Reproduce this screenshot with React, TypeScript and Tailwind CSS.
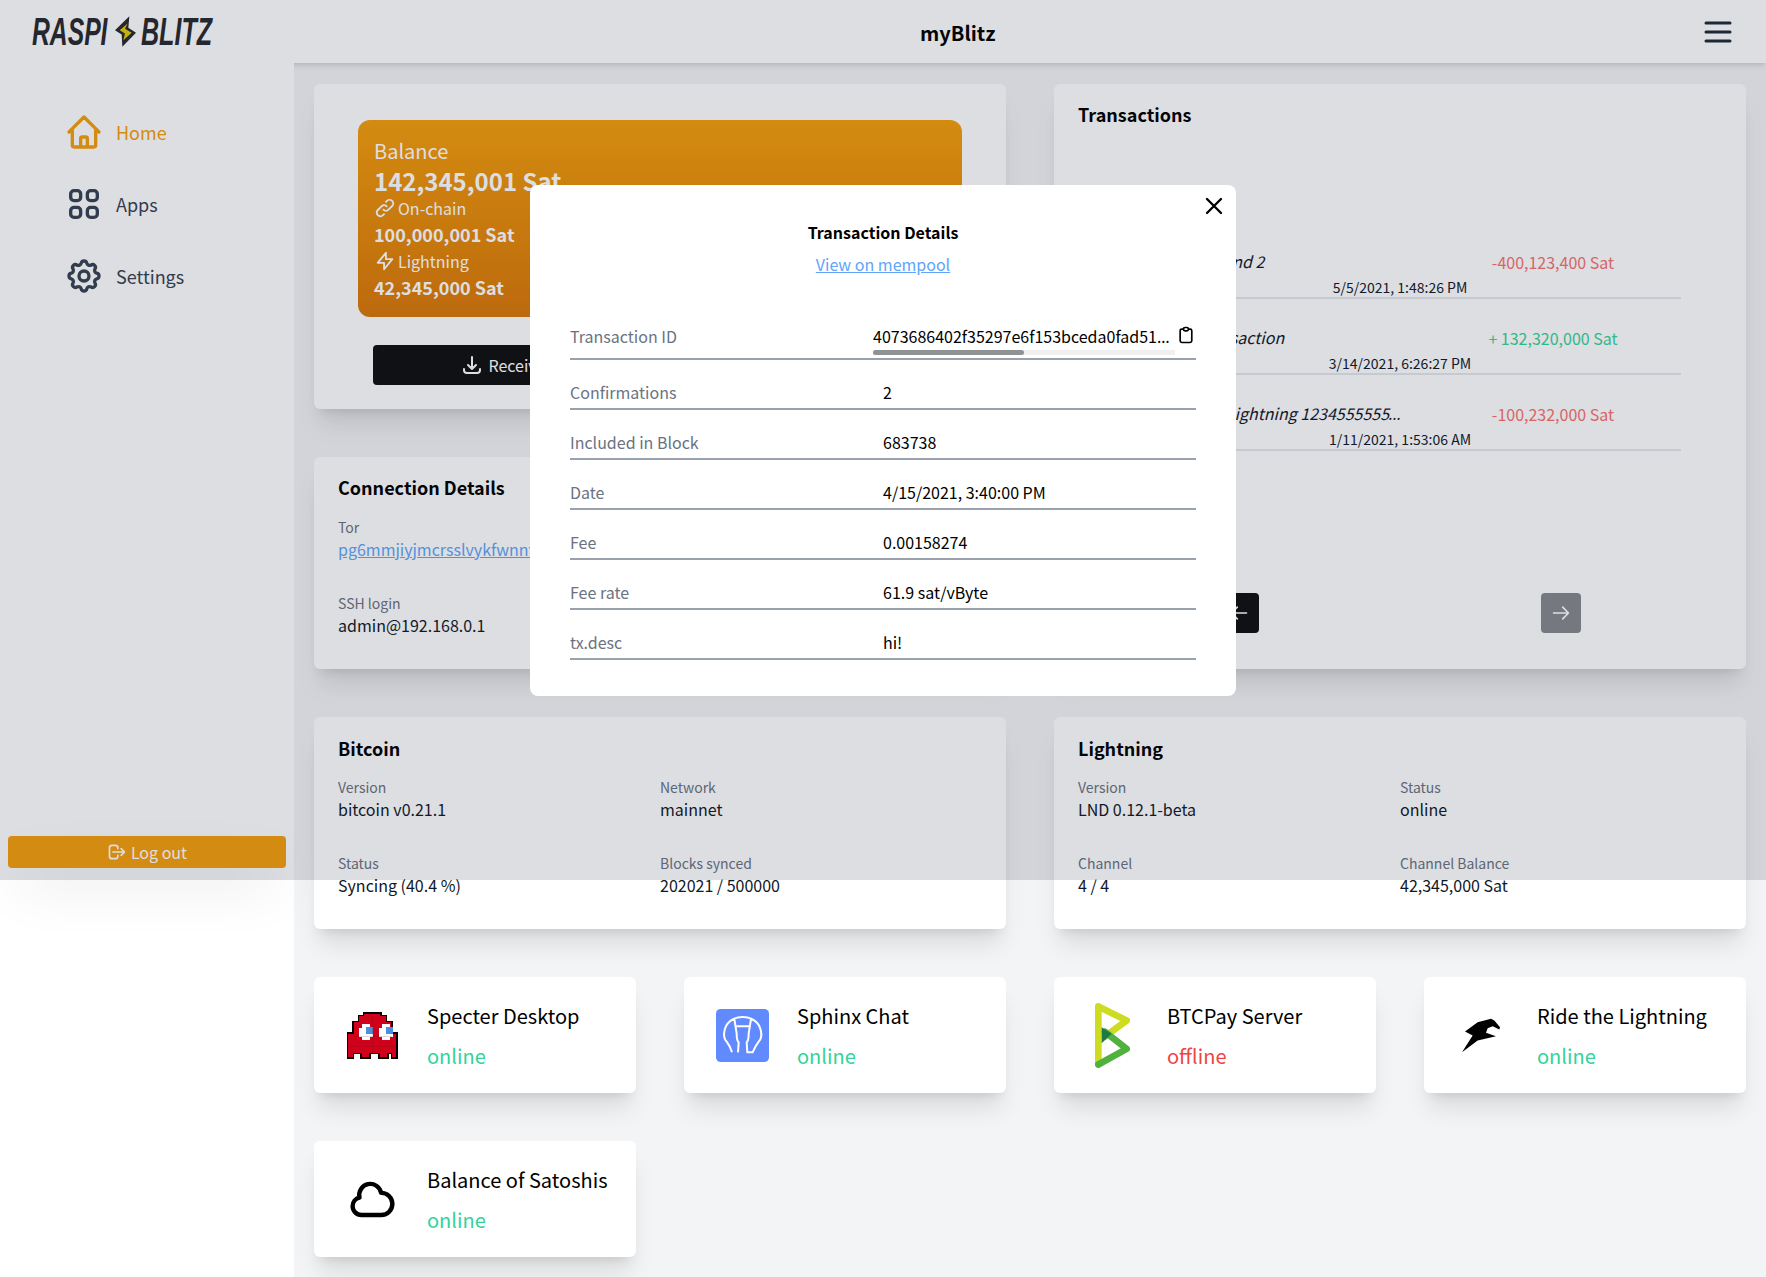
import {
  HiOutlineHome,
  HiOutlineViewGrid,
  HiOutlineCog,
  HiOutlineLogout,
  HiOutlineMenu,
  HiOutlineLink,
  HiOutlineLightningBolt,
  HiOutlineDownload,
  HiOutlineUpload,
  HiOutlineArrowLeft,
  HiOutlineArrowRight,
  HiOutlineX,
  HiOutlineClipboard,
  HiOutlineCloud,
} from "react-icons/hi";

function Logo() {
  return (
    <div className="ml-[2px] flex items-center font-['Liberation_Sans',sans-serif] text-[38px] leading-none font-bold italic text-[#26282c]">
      <span className="w-[83px] origin-left scale-x-[0.65] whitespace-nowrap">RASPI</span>
      <svg viewBox="0 0 63 92" className="h-[31px] w-[21px]">
        <path d="M43 0L0 42L20 55L22 92L63 50L40 35Z" fill="#26282c" />
        <path d="M38 22L14 42L30 52L25 72L50 50L30 38Z" fill="#e3c90f" />
      </svg>
      <span className="ml-[5px] origin-left scale-x-[0.66] whitespace-nowrap">BLITZ</span>
    </div>
  );
}

function Ghost() {
  return (
    <svg viewBox="0 0 155 142" className="h-[47px] w-[51px]" shapeRendering="crispEdges">
      <path
        d="M50 2H103V10H120V28H136V64H152V140H135V126H125V140H97V126H70V140H42V126H20V140H2V64H18V28H35V10H50Z"
        fill="#d0021b"
        stroke="#000"
        strokeWidth="5"
      />
      <path d="M37 47H47V37H70V47H80V75H70V85H47V75H37Z M97 47H107V37H130V47H140V75H130V85H107V75H97Z" fill="#fff" />
      <path d="M57 45H80V65H57Z M118 45H140V65H118Z" fill="#4a90e2" />
      <path d="M18 75H136M4 105H150M78 4V125" stroke="#5a0a14" strokeWidth="1" opacity="0.5" />
    </svg>
  );
}

function Sphinx() {
  return (
    <svg viewBox="0 0 159 159" className="h-[53px] w-[53px]">
      <rect width="159" height="159" rx="14" fill="#618aff" />
      <g fill="none" stroke="#fff" strokeWidth="6" strokeLinejoin="round">
        <path d="M48 130C44 116 38 106 32 98C24 90 22 78 26 62C32 38 54 24 80 24C106 24 128 38 134 62C138 78 136 90 128 98C122 106 116 116 110 130H94L92 100C98 94 98 84 98 74L105 30M66 130L68 100C62 94 62 84 62 74L55 30M60 52H100" />
      </g>
    </svg>
  );
}

function BtcPay() {
  return (
    <svg viewBox="0 0 105 194" className="h-[65px] w-[35px]">
      <g fill="none" strokeWidth="20" strokeLinecap="round" strokeLinejoin="round">
        <path d="M10 10V184" stroke="#cedc21" />
        <path d="M10 10L95 52L30 100" stroke="#cedc21" />
        <path d="M10 184L95 137L30 86" stroke="#51b13e" />
      </g>
      <path d="M20 72L50 92L20 120Z" fill="#1e7a44" />
    </svg>
  );
}

function Rtl() {
  return (
    <svg viewBox="60 38 120 104" className="-ml-[3px] h-[35px] w-[40px]">
      <path d="M63 140L95 90L72 78L110 50L150 40L160 45L177 65L175 72L155 62L140 68L135 82L165 92L110 105Z" fill="#000" />
    </svg>
  );
}

function Field({ label, value }: { label: string; value: string }) {
  return (
    <div>
      <div className="text-sm leading-5 text-gray-500">{label}</div>
      <div className="text-base leading-6 text-gray-900">{value}</div>
    </div>
  );
}

function TxRow({ desc, date, amount, plus }: { desc: string; date: string; amount: string; plus?: boolean }) {
  return (
    <div className="flex flex-col border-b-2 border-gray-200">
      <div className="flex items-center">
        {/* ellipsis comes from Noto Sans, the CJK font centres its dots */}
        <div className="w-[283px] truncate pl-[23px] font-['Noto_Sans',sans-serif] text-base italic text-gray-900">
          <span className="font-['Noto_Sans_CJK_SC',sans-serif]">{desc}</span>
        </div>
        <div className={plus ? "flex-1 pl-[23px] text-center text-base text-[#34d399]" : "flex-1 pl-[23px] text-center text-base text-[#f87171]"}>
          {amount}
        </div>
      </div>
      <div className="mt-[3px] text-center text-sm leading-5 text-gray-900">{date}</div>
    </div>
  );
}

function AppCard({ icon, name, status }: { icon: React.ReactNode; name: string; status: string }) {
  return (
    <div className="flex h-[116px] items-center rounded-md bg-white pl-8 shadow-xl">
      <div className="flex w-[53px] justify-center">{icon}</div>
      <div className="ml-7 pt-[2px]">
        <div className="text-xl leading-7 text-black">{name}</div>
        <div className={status === "online" ? "mt-3 text-xl leading-7 text-[#34d399]" : "mt-3 text-xl leading-7 text-[#ef4444]"}>{status}</div>
      </div>
    </div>
  );
}

function DetailRow({ label, value }: { label: string; value: string }) {
  return (
    <div className="flex h-[50px] items-end border-b-2 border-gray-400 pb-[4px]">
      <div className="w-1/2 text-base text-gray-500">{label}</div>
      <div className="w-1/2 text-base text-black">{value}</div>
    </div>
  );
}

export default function App() {
  return (
    <div className="relative flex min-h-[1277px] flex-col bg-gray-100 font-['Noto_Sans_CJK_SC','Noto_Sans',sans-serif]">
      <header className="relative flex h-[63px] items-center justify-between bg-white pr-[30px] pl-[30px] shadow-md">
        <Logo />
        <div className="absolute top-[19px] left-[920px] text-xl font-semibold text-black">myBlitz</div>
        <HiOutlineMenu className="h-9 w-9 text-gray-800" />
      </header>

      <div className="flex flex-1">
        <aside className="relative w-[294px] shrink-0 bg-white">
          <nav className="flex flex-col gap-8 pt-[49px] pl-16 text-lg text-gray-700">
            <a className="flex items-center gap-3 text-[#f59e0b]">
              <HiOutlineHome className="h-10 w-10" />
              Home
            </a>
            <a className="flex items-center gap-3">
              <HiOutlineViewGrid className="h-10 w-10" />
              Apps
            </a>
            <a className="flex items-center gap-3">
              <HiOutlineCog className="h-10 w-10" />
              Settings
            </a>
          </nav>
          <button className="absolute top-[773px] left-2 flex h-8 w-[278px] items-center justify-center gap-1 rounded bg-[#f59e0b] text-base text-white shadow-2xl">
            <HiOutlineLogout className="h-5 w-5" />
            Log out
          </button>
        </aside>

        <main className="grid flex-1 grid-cols-4 grid-rows-[325px_212px_212px_116px_116px] gap-12 px-5 pt-[21px] pb-5 text-gray-900">
          <section className="col-span-2 rounded-md bg-white px-11 pt-9 shadow-xl">
            <div className="h-[197px] rounded-xl bg-gradient-to-b from-[#f59e0b] to-[#d97706] pt-[17px] pr-4 pl-4 text-white">
              <div className="text-xl leading-7">Balance</div>
              <div className="text-2xl leading-8 font-semibold">142,345,001 Sat</div>
              <div className="-mt-[1px] flex items-center text-base leading-6">
                <HiOutlineLink className="mr-[2px] h-[22px] w-[22px]" />
                On-chain
              </div>
              <div className="text-lg leading-7 font-semibold">100,000,001 Sat</div>
              <div className="mt-[1px] flex items-center text-base leading-6">
                <HiOutlineLightningBolt className="mr-[2px] h-[22px] w-[22px]" />
                Lightning
              </div>
              <div className="text-lg leading-7 font-semibold">42,345,000 Sat</div>
            </div>
            <div className="mt-7 flex gap-[54px] px-[15px]">
              <button className="flex h-10 flex-1 items-center justify-center gap-1 rounded bg-[#0f0f10] text-base text-white">
                <HiOutlineDownload className="h-6 w-6" />
                Receive
              </button>
              <button className="flex h-10 flex-1 items-center justify-center gap-1 rounded bg-[#0f0f10] text-base text-white">
                <HiOutlineUpload className="h-6 w-6" />
                Send
              </button>
            </div>
          </section>

          <section className="col-span-2 row-span-2 flex flex-col rounded-md bg-white px-6 pt-4 shadow-xl">
            <h2 className="text-lg leading-7 font-semibold text-black">Transactions</h2>
            <div className="mt-[121px] flex flex-col gap-[26px] px-[41px]">
              <TxRow desc="Funding round 2" date="5/5/2021, 1:48:26 PM" amount="-400,123,400 Sat" />
              <TxRow desc="Testing transaction" date="3/14/2021, 6:26:27 PM" amount="+ 132,320,000 Sat" plus />
              <TxRow desc="Sending to Lightning 123455555555555" date="1/11/2021, 1:53:06 AM" amount="-100,232,000 Sat" />
            </div>
            <div className="mt-[142px] flex justify-center gap-[282px]">
              <button className="flex h-10 w-10 items-center justify-center rounded bg-[#0f0f10] text-white">
                <HiOutlineArrowLeft className="h-5 w-5" />
              </button>
              <button className="flex h-10 w-10 items-center justify-center rounded bg-[#87888c] text-white">
                <HiOutlineArrowRight className="h-5 w-5" />
              </button>
            </div>
          </section>

          <section className="col-span-2 rounded-md bg-white px-6 pt-4 shadow-xl">
            <h2 className="text-lg leading-7 font-semibold text-black">Connection Details</h2>
            <div className="mt-4 text-sm leading-5 text-gray-500">Tor</div>
            <a className="block truncate text-base leading-6 text-[#60a5fa] underline">pg6mmjiyjmcrsslvykfwnntlaru7p5svn6y2ymmju6nubxndf4pscryd.onion</a>
            <div className="mt-8">
              <Field label="SSH login" value="admin@192.168.0.1" />
            </div>
          </section>

          <section className="col-span-2 rounded-md bg-white px-6 pt-[17px] shadow-xl">
            <h2 className="text-lg leading-7 font-semibold text-black">Bitcoin</h2>
            <div className="mt-[15px] grid grid-cols-2 gap-y-8">
              <Field label="Version" value="bitcoin v0.21.1" />
              <Field label="Network" value="mainnet" />
              <Field label="Status" value="Syncing (40.4 %)" />
              <Field label="Blocks synced" value="202021 / 500000" />
            </div>
          </section>

          <section className="col-span-2 rounded-md bg-white px-6 pt-[17px] shadow-xl">
            <h2 className="text-lg leading-7 font-semibold text-black">Lightning</h2>
            <div className="mt-[15px] grid grid-cols-2 gap-y-8">
              <Field label="Version" value="LND 0.12.1-beta" />
              <Field label="Status" value="online" />
              <Field label="Channel" value="4 / 4" />
              <Field label="Channel Balance" value="42,345,000 Sat" />
            </div>
          </section>

          <AppCard icon={<Ghost />} name="Specter Desktop" status="online" />
          <AppCard icon={<Sphinx />} name="Sphinx Chat" status="online" />
          <AppCard icon={<BtcPay />} name="BTCPay Server" status="offline" />
          <AppCard icon={<Rtl />} name="Ride the Lightning" status="online" />
          <AppCard icon={<HiOutlineCloud className="h-[53px] w-[53px] text-black" />} name="Balance of Satoshis" status="online" />
        </main>
      </div>

      <div className="absolute inset-x-0 top-0 h-[880px] bg-[rgba(30,33,55,0.15)]" />

      <div className="absolute top-[185px] left-[530px] h-[511px] w-[706px] rounded-lg bg-white px-10 text-base">
        <button className="absolute top-[7px] right-[8px] text-black">
          <HiOutlineX className="h-7 w-7" />
        </button>
        <h3 className="pt-[35px] text-center font-semibold text-black">Transaction Details</h3>
        <a className="mt-2 block text-center text-[#60a5fa] underline">View on mempool</a>

        <div className="mt-[49px] flex h-[35px] border-b-2 border-gray-400">
          <div className="-mt-[1px] w-[304px] text-gray-500">Transaction ID</div>
          <div className="-mt-[1px] w-[302px]">
            <div className="truncate font-['Noto_Sans',sans-serif] leading-6 text-black">
              <span className="font-['Noto_Sans_CJK_SC',sans-serif]">4073686402f35297e6f153bceda0fad5177e4f9a21cc</span>
            </div>
            <div className="mt-[1px] h-[5px] bg-[#f0f0f0]">
              <div className="h-full w-1/2 rounded-full bg-[#8f9393]" />
            </div>
          </div>
          <HiOutlineClipboard className="ml-[1px] h-[20px] w-[20px] text-black" />
        </div>
        <DetailRow label="Confirmations" value="2" />
        <DetailRow label="Included in Block" value="683738" />
        <DetailRow label="Date" value="4/15/2021, 3:40:00 PM" />
        <DetailRow label="Fee" value="0.00158274" />
        <DetailRow label="Fee rate" value="61.9 sat/vByte" />
        <DetailRow label="tx.desc" value="hi!" />
      </div>
    </div>
  );
}
